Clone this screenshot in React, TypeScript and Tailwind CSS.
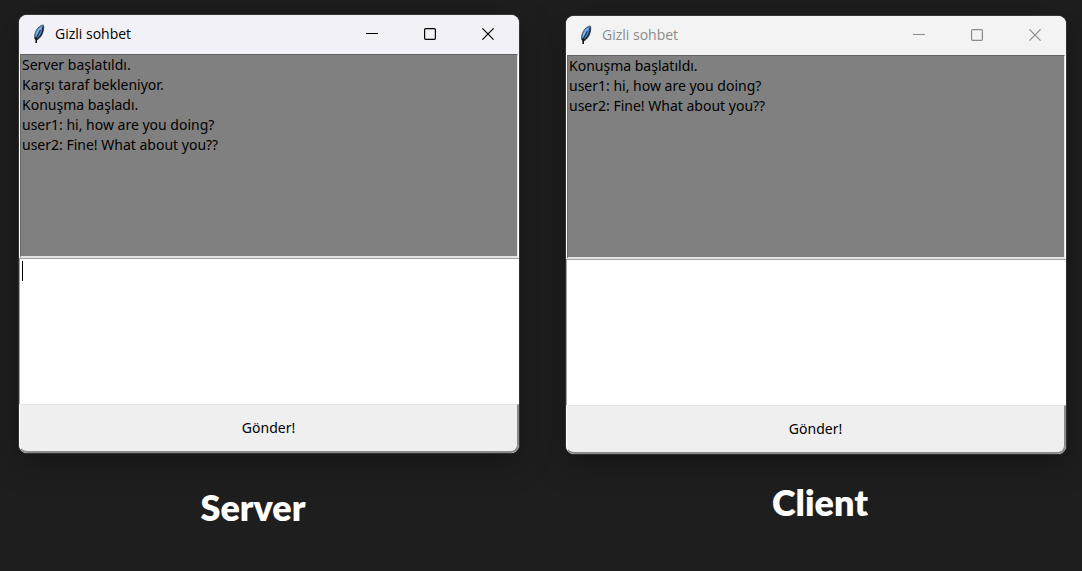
import React from "react";

type Side = {
  id: string;
  caption: string;
  captionClass: string;
  topClass: string;
  active: boolean;
  messages: string[];
};

const sides: Side[] = [
  {
    id: "server",
    caption: "Server",
    captionClass: "mt-8 pr-8",
    topClass: "pt-[15px]",
    active: true,
    messages: [
      "Server başlatıldı.",
      "Karşı taraf bekleniyor.",
      "Konuşma başladı.",
      "user1: hi, how are you doing?",
      "user2: Fine! What about you??",
    ],
  },
  {
    id: "client",
    caption: "Client",
    captionClass: "mt-[26px] pl-2",
    topClass: "pt-4",
    active: false,
    messages: [
      "Konuşma başlatıldı.",
      "user1: hi, how are you doing?",
      "user2: Fine! What about you??",
    ],
  },
];

function Feather() {
  return (
    <svg width="16" height="20" viewBox="0 0 16 20" aria-hidden="true">
      <path
        d="M12.4 1C9.8 1 6.8 3.4 5.2 6.6C3.8 9.4 3.2 12.6 4 15.2L6 16C8.8 14.4 11.2 11.2 12.2 7.4C12.8 5 13 2.6 12.4 1Z"
        fill="#4a8ad0"
        stroke="#55585c"
        strokeWidth="1"
      />
      <path d="M11 2.4C8.4 3.6 6.2 6.2 5.2 9.4L4.8 12.4L9.4 6Z" fill="#86b9ee" />
      <path d="M12 2.6C12.2 7.4 10.2 12 6 15.2" fill="none" stroke="#202428" strokeWidth="1.3" />
      <path d="M9.4 6L6.6 11.4L5.2 15" fill="none" stroke="#1b3550" strokeWidth="1.2" />
      <path d="M4.2 13.4L5.2 15.4V19" fill="none" stroke="#141414" strokeWidth="1.6" />
    </svg>
  );
}

function TitleBar({ active }: { active: boolean }) {
  const button = "flex h-full w-[58px] items-center justify-center";
  return (
    <header
      className={`flex h-[39px] items-center pr-0.5 pb-0.5 pl-3 ${
        active ? "bg-[#f2f1f8] text-black" : "bg-[#f3f3f3] text-[#8b8b8b]"
      }`}
    >
      <Feather />
      <h1 className="ml-2 grow font-['Open_Sans','Noto_Sans',sans-serif] text-sm">Gizli sohbet</h1>
      <button type="button" aria-label="Minimize" className={button}>
        <svg width="12" height="12" viewBox="0 0 12 12" fill="none" stroke="currentColor">
          <path d="M0 5.5H12" />
        </svg>
      </button>
      <button type="button" aria-label="Maximize" className={button}>
        <svg width="12" height="12" viewBox="0 0 12 12" fill="none" stroke="currentColor" strokeWidth="1.2">
          <rect x="0.6" y="0.6" width="10.8" height="10.8" rx="1.2" />
        </svg>
      </button>
      <button type="button" aria-label="Close" className={button}>
        <svg width="12" height="12" viewBox="0 0 12 12" fill="none" stroke="currentColor" strokeWidth="1.2">
          <path d="M0.4 0.4L11.6 11.6M11.6 0.4L0.4 11.6" />
        </svg>
      </button>
    </header>
  );
}

function ChatWindow({ side }: { side: Side }) {
  return (
    <section
      aria-label={side.caption}
      className="overflow-hidden rounded-lg bg-white shadow-[0_8px_32px_rgba(0,0,0,0.35),0_0_0_1px_#3c3c3c]"
    >
      <TitleBar active={side.active} />
      <div className="px-px">
        <div
          role="log"
          className="h-[204px] border-t border-r border-b-2 border-l border-t-[#606060] border-r-[#e3e3e3] border-b-[#e3e3e3] border-l-[#696969] bg-[#808080] pl-px text-sm leading-5 text-black"
        >
          {side.messages.map((m) => (
            <p key={m}>{m}</p>
          ))}
        </div>
      </div>
      <div className="relative">
        <textarea
          aria-label="Mesaj"
          className="block h-[146px] w-full resize-none border-t border-l border-t-[#a0a0a0] border-l-[#a0a0a0] bg-white px-0.5 text-sm leading-5 text-black outline-none"
        />
        {side.active && <span className="absolute top-[3px] left-[3px] h-5 w-px bg-black" />}
      </div>
      <button
        type="button"
        className="block h-[49px] w-full rounded-b-lg border-t border-r-2 border-b-2 border-l border-t-[#e3e3e3] border-r-[#8a8a8a] border-b-[#8a8a8a] border-l-white bg-[#efefef] text-sm text-black"
      >
        Gönder!
      </button>
    </section>
  );
}

export default function App() {
  return (
    <main className="grid min-h-screen grid-cols-2 gap-[47px] bg-[#1e1e1e] pr-4 pl-[19px] font-['Noto_Sans','Open_Sans',sans-serif]">
      {sides.map((side) => (
        <figure key={side.id} className={side.topClass}>
          <ChatWindow side={side} />
          <figcaption
            className={`text-center font-['Lato',sans-serif] text-4xl leading-[44px] font-extrabold text-white ${side.captionClass}`}
          >
            {side.caption}
          </figcaption>
        </figure>
      ))}
    </main>
  );
}
